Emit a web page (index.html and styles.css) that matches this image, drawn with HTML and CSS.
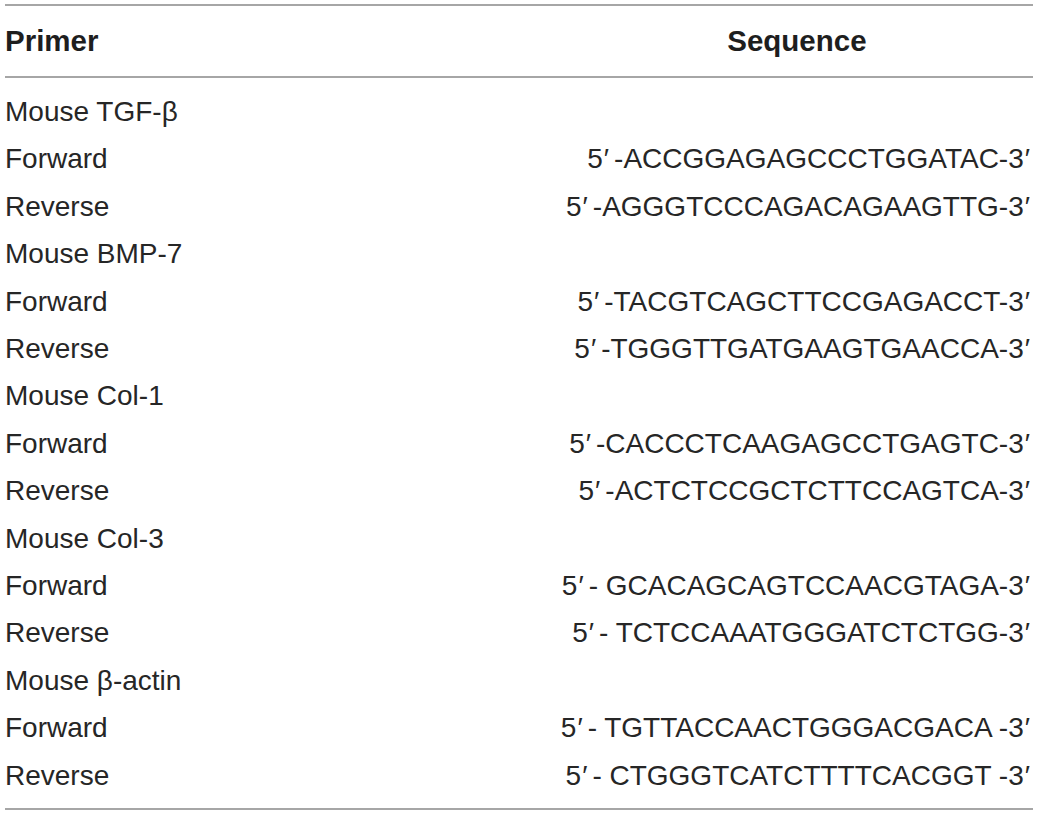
FILE: index.html
```html
<!DOCTYPE html>
<html>
<head>
<meta charset="utf-8">
<link rel="stylesheet" href="styles.css">
</head>
<body>
<table class="primers">
  <thead>
    <tr><th class="c-name">Primer</th><th class="c-seq">Sequence</th></tr>
  </thead>
  <tbody>
    <tr class="first"><td class="c-name">Mouse TGF-β</td><td class="c-seq"></td></tr>
    <tr><td class="c-name">Forward</td><td class="c-seq">5<span class="prime">′</span>-ACCGGAGAGCCCTGGATAC-3<span class="prime-end">′</span></td></tr>
    <tr><td class="c-name">Reverse</td><td class="c-seq">5<span class="prime">′</span>-AGGGTCCCAGACAGAAGTTG-3<span class="prime-end">′</span></td></tr>
    <tr><td class="c-name">Mouse BMP-7</td><td class="c-seq"></td></tr>
    <tr><td class="c-name">Forward</td><td class="c-seq">5<span class="prime">′</span>-TACGTCAGCTTCCGAGACCT-3<span class="prime-end">′</span></td></tr>
    <tr><td class="c-name">Reverse</td><td class="c-seq">5<span class="prime">′</span>-TGGGTTGATGAAGTGAACCA-3<span class="prime-end">′</span></td></tr>
    <tr><td class="c-name">Mouse Col-1</td><td class="c-seq"></td></tr>
    <tr><td class="c-name">Forward</td><td class="c-seq">5<span class="prime">′</span>-CACCCTCAAGAGCCTGAGTC-3<span class="prime-end">′</span></td></tr>
    <tr><td class="c-name">Reverse</td><td class="c-seq">5<span class="prime">′</span>-ACTCTCCGCTCTTCCAGTCA-3<span class="prime-end">′</span></td></tr>
    <tr><td class="c-name">Mouse Col-3</td><td class="c-seq"></td></tr>
    <tr><td class="c-name">Forward</td><td class="c-seq">5<span class="prime">′</span>- GCACAGCAGTCCAACGTAGA-3<span class="prime-end">′</span></td></tr>
    <tr><td class="c-name">Reverse</td><td class="c-seq">5<span class="prime">′</span>- TCTCCAAATGGGATCTCTGG-3<span class="prime-end">′</span></td></tr>
    <tr><td class="c-name">Mouse β-actin</td><td class="c-seq"></td></tr>
    <tr><td class="c-name">Forward</td><td class="c-seq">5<span class="prime">′</span>- TGTTACCAACTGGGACGACA -3<span class="prime-end">′</span></td></tr>
    <tr class="last"><td class="c-name">Reverse</td><td class="c-seq">5<span class="prime">′</span>- CTGGGTCATCTTTTCACGGT -3<span class="prime-end">′</span></td></tr>
  </tbody>
</table>
</body>
</html>
```
FILE: styles.css
```css
html, body {
  margin: 0;
  padding: 0;
  background: #ffffff;
}

body {
  padding: 4px 6px 0 5px;
  font-family: "Liberation Sans", Arial, Helvetica, sans-serif;
  color: #262626;
}

.primers {
  width: 1028px;
  border-collapse: collapse;
  font-size: 28px;
  border-top: 2px solid #a6a6a6;
  border-bottom: 2px solid #a6a6a6;
}

.primers th,
.primers td {
  padding: 0;
  white-space: nowrap;
}

.primers thead th {
  font-weight: bold;
  font-size: 29.5px;
  color: #1e1e1e;
  height: 69px;
  line-height: 69px;
  vertical-align: middle;
  border-bottom: 2px solid #a6a6a6;
  padding-bottom: 1px;
}

.primers thead th.c-name {
  text-align: left;
}

.primers thead th.c-seq {
  text-align: center;
  width: 470px;
}

.primers td {
  line-height: 47.4px;
  height: 47.4px;
}

.primers td.c-name {
  text-align: left;
}

.primers td.c-seq {
  text-align: right;
  padding-right: 3px;
}

.prime {
  margin-left: 1px;
  margin-right: 5px;
}

.prime-end {
  margin-left: 1px;
}

.primers tr.first td {
  padding-top: 10px;
}

.primers tr.last td {
  padding-bottom: 9px;
}
```
